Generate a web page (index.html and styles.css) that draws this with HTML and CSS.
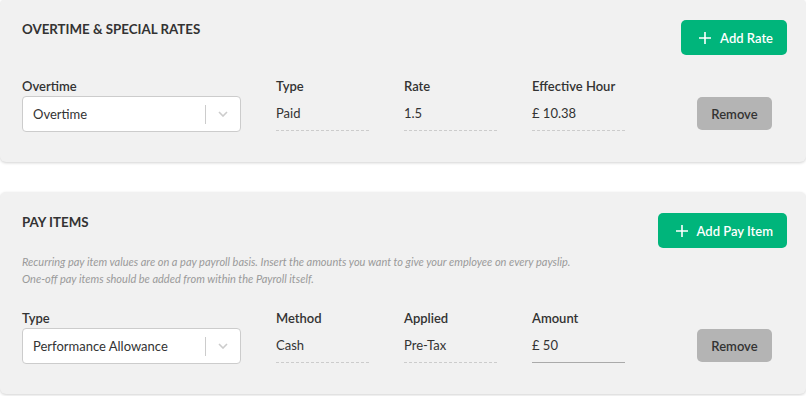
FILE: index.html
```html
<!DOCTYPE html>
<html lang="en">
<head>
    <meta charset="UTF-8">
    <title>Employee Pay</title>
    <link rel="stylesheet" href="styles.css">
</head>
<body>

    <div class="card first">
        <div class="card-header">
            <h2>OVERTIME &amp; SPECIAL RATES</h2>
            <button class="btn-add">
                <svg width="12" height="12" viewBox="0 0 12 12"><path d="M6 0v12M0 6h12" stroke="#fff" stroke-width="1.6"/></svg>
                Add Rate
            </button>
        </div>

        <div class="fields">
            <div class="field select-field">
                <label>Overtime</label>
                <div class="select">
                    <span>Overtime</span>
                    <span class="select-sep"></span>
                    <svg class="chevron" width="10" height="6" viewBox="0 0 10 6"><path d="M1 1l4 4 4-4" fill="none" stroke="#ccc" stroke-width="1.6"/></svg>
                </div>
            </div>
            <div class="field">
                <label>Type</label>
                <div class="value">Paid</div>
            </div>
            <div class="field">
                <label>Rate</label>
                <div class="value">1.5</div>
            </div>
            <div class="field">
                <label>Effective Hour</label>
                <div class="value">£ 10.38</div>
            </div>
            <button class="btn-remove">Remove</button>
        </div>
    </div>

    <div class="card">
        <div class="card-header">
            <h2>PAY ITEMS</h2>
            <button class="btn-add">
                <svg width="12" height="12" viewBox="0 0 12 12"><path d="M6 0v12M0 6h12" stroke="#fff" stroke-width="1.6"/></svg>
                Add Pay Item
            </button>
        </div>
        <p class="hint">Recurring pay item values are on a pay payroll basis. Insert the amounts you want to give your employee on every payslip.<br>One-off pay items should be added from within the Payroll itself.</p>

        <div class="fields">
            <div class="field select-field">
                <label>Type</label>
                <div class="select">
                    <span>Performance Allowance</span>
                    <span class="select-sep"></span>
                    <svg class="chevron" width="10" height="6" viewBox="0 0 10 6"><path d="M1 1l4 4 4-4" fill="none" stroke="#ccc" stroke-width="1.6"/></svg>
                </div>
            </div>
            <div class="field">
                <label>Method</label>
                <div class="value">Cash</div>
            </div>
            <div class="field">
                <label>Applied</label>
                <div class="value">Pre-Tax</div>
            </div>
            <div class="field">
                <label>Amount</label>
                <div class="value input">£ 50</div>
            </div>
            <button class="btn-remove">Remove</button>
        </div>
    </div>

</body>
</html>
```

FILE: styles.css
```css
body {
    margin: 0;
    font-family: "Source Sans Pro", Lato, "Noto Sans", sans-serif;
    color: #333;
    background: #fff;
}

.card {
    background-color: #f1f1f1;
    border-radius: 6px;
    box-shadow: 0 1px 3px rgba(0, 0, 0, 0.18);
    padding: 21px 19px 30px 22px;
    margin-bottom: 30px;
}

.card.first {
    margin-top: -1px;
}

.card-header {
    display: flex;
    justify-content: space-between;
    align-items: flex-start;
}

.card-header h2 {
    margin: 0;
    font-size: 13.3px;
    line-height: 18px;
    font-weight: 700;
    color: #333;
}

.btn-add {
    display: flex;
    align-items: center;
    gap: 9px;
    height: 35px;
    padding: 0 14px 0 18px;
    border: none;
    border-radius: 5px;
    background-color: #00b57b;
    color: #fff;
    font-family: inherit;
    font-size: 13px;
    font-weight: 600;
    cursor: pointer;
}

.hint {
    margin: 5px 0 0;
    font-size: 11px;
    line-height: 17px;
    font-style: italic;
    color: #9a9a9a;
}

.fields {
    display: flex;
    align-items: flex-start;
    margin-top: 23px;
}

.field {
    width: 93px;
    margin-right: 35px;
}

.select-field {
    width: 219px;
}

.field label {
    display: block;
    height: 16px;
    line-height: 16px;
    font-size: 13px;
    font-weight: 600;
    margin-bottom: 2px;
}

.select {
    display: flex;
    align-items: center;
    height: 36px;
    box-sizing: border-box;
    background: #fff;
    border: 1px solid #ccc;
    border-radius: 4px;
    padding: 0 12px 0 10px;
    font-size: 13px;
}

.select span:first-child {
    flex: 1;
}

.select-sep {
    width: 1px;
    height: 19px;
    background: #ccc;
    margin-right: 12px;
}

.value {
    height: 35px;
    box-sizing: border-box;
    padding-top: 8px;
    line-height: 18px;
    font-size: 13px;
    border-bottom: 1px dashed #ccc;
}

.value.input {
    border-bottom: 1px solid #aaa;
}

.btn-remove {
    margin-left: 37px;
    margin-top: 19px;
    width: 75px;
    height: 33px;
    border: none;
    border-radius: 5px;
    background-color: #b4b4b4;
    color: #333;
    font-family: inherit;
    font-size: 13px;
    font-weight: 600;
    cursor: pointer;
}
```
